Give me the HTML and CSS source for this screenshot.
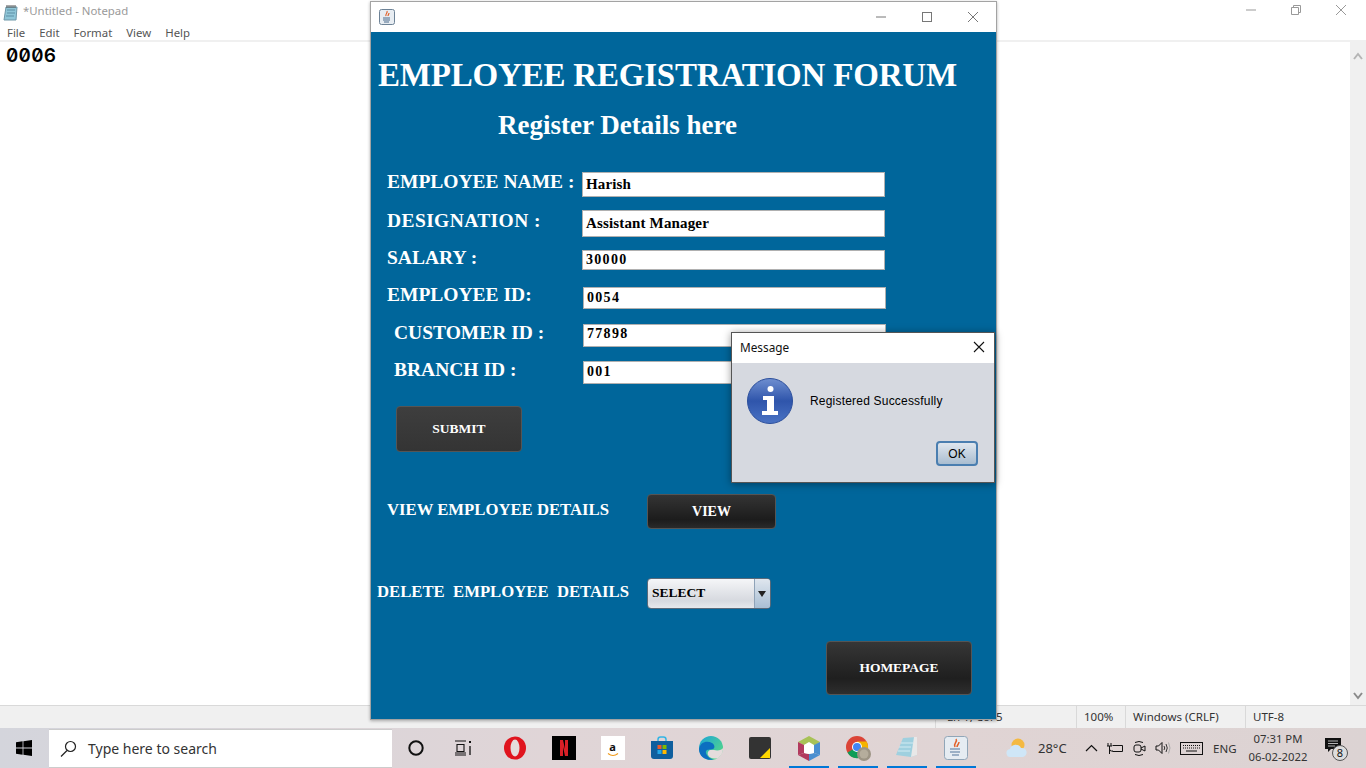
FILE: index.html
```html
<!DOCTYPE html>
<html lang="en">
<head>
  <meta charset="UTF-8">
  <title>Employee Registration</title>
  <link rel="stylesheet" href="styles.css">
</head>
<body>
  <div class="notepad">
    <div class="np-title">
      <svg class="np-icon" width="17" height="17" viewBox="0 0 17 17"><path d="M3 3h11l-1 13H1z" fill="#8fc6d8" stroke="#6f97a8"/><path d="M4 6h8M4 9h8M3 12h8" stroke="#5d8fa5"/><path d="M4 1v3M6 1v3M8 1v3M10 1v3M12 1v3" stroke="#555"/></svg>
      <span class="np-name">*Untitled - Notepad</span>
      <div class="np-controls">
        <svg width="12" height="12" viewBox="0 0 12 12"><path d="M1 6h10" stroke="#999"/></svg>
        <svg width="12" height="12" viewBox="0 0 12 12"><path d="M1.5 3.5h7v7h-7zM3.5 3.5v-2h7v7h-2" fill="none" stroke="#999"/></svg>
        <svg width="12" height="12" viewBox="0 0 12 12"><path d="M1 1l10 10M11 1L1 11" stroke="#999"/></svg>
      </div>
    </div>
    <div class="np-menu">
      <span>File</span><span>Edit</span><span>Format</span><span>View</span><span>Help</span>
    </div>
    <div class="np-body">
      <div class="np-text">0006</div>
      <div class="np-scroll">
        <svg width="10" height="8" viewBox="0 0 10 8"><path d="M1 7l4-5 4 5" fill="none" stroke="#b5b5b5" stroke-width="2"/></svg>
        <svg width="10" height="8" viewBox="0 0 10 8"><path d="M1 1l4 5 4-5" fill="none" stroke="#8a8a8a" stroke-width="2"/></svg>
      </div>
    </div>
    <div class="np-status">
      <span class="st-pos">Ln 1, Col 5</span>
      <span class="st-zoom">100%</span>
      <span class="st-eol">Windows (CRLF)</span>
      <span class="st-enc">UTF-8</span>
    </div>
  </div>

  <div class="emp-window">
    <div class="titlebar">
      <svg class="java-small" width="16" height="16" viewBox="0 0 16 16"><rect x=".5" y=".5" width="15" height="15" rx="2" fill="#e8edf2" stroke="#6d8296"/><path d="M8 2c1 2-2 3-1 5M10 4c0 1-1 2-1 3" fill="none" stroke="#e2622b" stroke-width="1.2"/><path d="M4 9h7M4 11h7M5 13h5" stroke="#4a6a8c"/></svg>
      <div class="win-controls">
        <svg width="12" height="12" viewBox="0 0 12 12"><path d="M1 6h10" stroke="#777"/></svg>
        <svg width="12" height="12" viewBox="0 0 12 12"><rect x="1.5" y="1.5" width="9" height="9" fill="none" stroke="#777"/></svg>
        <svg width="12" height="12" viewBox="0 0 12 12"><path d="M1 1l10 10M11 1L1 11" stroke="#777"/></svg>
      </div>
    </div>
    <div class="emp-form">
      <h1 class="form-title">EMPLOYEE REGISTRATION FORUM</h1>
      <h2 class="form-sub">Register Details here</h2>

      <div class="row row-name"><label>EMPLOYEE NAME :</label><div class="field">Harish</div></div>
      <div class="row row-desig"><label>DESIGNATION :</label><div class="field">Assistant Manager</div></div>
      <div class="row row-salary"><label>SALARY :</label><div class="field field-num">30000</div></div>
      <div class="row row-id"><label>EMPLOYEE ID:</label><div class="field field-num">0054</div></div>
      <div class="row row-cust"><label>CUSTOMER ID :</label><div class="field field-num">77898</div></div>
      <div class="row row-branch"><label>BRANCH ID :</label><div class="field field-num">001</div></div>

      <button class="btn btn-submit">SUBMIT</button>

      <div class="action action-view">
        <span class="action-label">VIEW EMPLOYEE DETAILS</span>
        <button class="btn btn-view">VIEW</button>
      </div>
      <div class="action action-delete">
        <span class="action-label">DELETE&nbsp; EMPLOYEE&nbsp; DETAILS</span>
        <div class="combo"><span class="combo-text">SELECT</span><span class="combo-arrow"></span></div>
      </div>

      <button class="btn btn-home">HOMEPAGE</button>
    </div>
  </div>

  <div class="dialog">
    <div class="dlg-title">
      <span>Message</span>
      <svg width="12" height="12" viewBox="0 0 12 12"><path d="M1 1l10 10M11 1L1 11" stroke="#111" stroke-width="1.1"/></svg>
    </div>
    <div class="dlg-body">
      <div class="dlg-msg">
        <svg width="46" height="46" viewBox="0 0 46 46">
          <defs><linearGradient id="infoBlue" x1="0" y1="0" x2="0" y2="1"><stop offset="0" stop-color="#6f8fd0"/><stop offset=".5" stop-color="#2f55ab"/><stop offset="1" stop-color="#4a73c4"/></linearGradient></defs>
          <circle cx="23" cy="23" r="22.5" fill="url(#infoBlue)" stroke="#2c4f9c"/>
          <circle cx="23.5" cy="11" r="3" fill="#fff"/>
          <path d="M16 18h11v15h4v4H15v-4h5V22h-4z" fill="#fff"/>
        </svg>
        <span>Registered Successfully</span>
      </div>
      <button class="dlg-ok">OK</button>
    </div>
  </div>

  <div class="taskbar">
    <div class="start">
      <svg width="16" height="16" viewBox="0 0 16 16"><path d="M0 2.2L6.6 1.3V7.6H0zM7.4 1.2L16 0V7.6H7.4zM0 8.4H6.6V14.7L0 13.8zM7.4 8.4H16V16L7.4 14.8z" fill="#000"/></svg>
    </div>
    <div class="search">
      <svg width="17" height="17" viewBox="0 0 17 17"><circle cx="10.5" cy="6.5" r="5" fill="none" stroke="#222" stroke-width="1.2"/><path d="M7 10.5L1 16.5" stroke="#222" stroke-width="1.3"/></svg>
      <span>Type here to search</span>
    </div>
    <div class="tb-tool">
      <svg width="16" height="16" viewBox="0 0 16 16"><circle cx="8" cy="8" r="6.7" fill="none" stroke="#111" stroke-width="2"/></svg>
    </div>
    <div class="tb-tool tb-tasks">
      <svg width="18" height="16" viewBox="0 0 18 16"><path d="M1 1h11M1 15h11M3 4.500h7v7H3zM1 13h11" fill="none" stroke="#111" stroke-width="1.100"/><path d="M15 1h2v2h-2z" fill="#111"/><path d="M16 6v9" stroke="#111" stroke-width="1.300"/></svg>
    </div>
    <div class="tb-app">
      <svg width="24" height="24" viewBox="0 0 24 24"><ellipse cx="12" cy="12" rx="11" ry="11.500" fill="#e0141e"/><ellipse cx="12" cy="12" rx="4.500" ry="8.500" fill="#e5dcdc"/></svg>
    </div>
    <div class="tb-app">
      <svg width="24" height="24" viewBox="0 0 24 24"><rect width="24" height="24" fill="#000"/><path d="M8 4h3l2 9V4h3v16h-3l-2-9v9H8z" fill="#d81f26"/></svg>
    </div>
    <div class="tb-app">
      <div class="amazon">
        <span>a</span>
        <svg width="12" height="4" viewBox="0 0 12 4"><path d="M1 .5q5 4 10 0" fill="none" stroke="#f09a1a" stroke-width="1.200"/></svg>
      </div>
    </div>
    <div class="tb-app">
      <svg width="24" height="24" viewBox="0 0 24 24"><path d="M8 6V3.500Q8 1 10.500 1h3Q16 1 16 3.500V6" fill="none" stroke="#33b5e5" stroke-width="1.500"/><path d="M1 5h22v15q0 3-3 3H4q-3 0-3-3z" fill="#0f5f9e"/><rect x="7.500" y="9" width="4" height="4" fill="#ef5a2a"/><rect x="12.500" y="9" width="4" height="4" fill="#7fba00"/><rect x="7.500" y="14" width="4" height="4" fill="#22a7e8"/><rect x="12.500" y="14" width="4" height="4" fill="#ffb900"/></svg>
    </div>
    <div class="tb-app">
      <svg width="24" height="24" viewBox="0 0 24 24"><defs><linearGradient id="edgeG" x1="0" y1="0" x2="1" y2="1"><stop offset="0" stop-color="#1aa4d8"/><stop offset="1" stop-color="#5fe07a"/></linearGradient></defs><circle cx="12" cy="12" r="12" fill="url(#edgeG)"/><path d="M0 13C1 6 8 4 13 7c3 2 3 5 1 6-3 1-6 0-7 2-1 3 3 8 8 8.500C7 25 0 21 0 13z" fill="#0c6fc0"/><path d="M15 14c4 1 8 0 9-2 0 5-2 8-5 10-3 1-8 1-10-3-1-3 1-5 3-5z" fill="#e5dcdc"/></svg>
    </div>
    <div class="tb-app">
      <svg width="22" height="22" viewBox="0 0 22 22"><rect width="22" height="22" rx="2" fill="#333"/><path d="M11 21L21 11v10z" fill="#ffd800"/></svg>
    </div>
    <div class="tb-app tb-open">
      <svg width="24" height="25" viewBox="0 0 24 25"><path d="M12 0l11 6-11 7z" fill="#a8c256"/><path d="M1 6l11-6v7L7 9z" fill="#a8c256"/><path d="M1 6l6 3v8l-6 2z" fill="#b23a5e"/><path d="M1 19l6-2 5 1v7z" fill="#b23a5e"/><path d="M23 6l-6 3v8l6 2z" fill="#4a8fd0"/><path d="M23 19l-6-2-5 1v7z" fill="#4a8fd0"/><path d="M12 6l5 3v8l-5 1-5-1V9z" fill="#fff"/></svg>
    </div>
    <div class="tb-app tb-open">
      <svg width="26" height="26" viewBox="0 0 26 26"><circle cx="12" cy="12" r="11" fill="#db4437"/><path d="M12 12L2.500 17.500A11 11 0 0 0 14 23z" fill="#0f9d58"/><path d="M12 6.500h9.500A11 11 0 0 1 14 23z" fill="#f4b400"/><circle cx="12" cy="12" r="5" fill="#fff"/><circle cx="12" cy="12" r="4" fill="#4285f4"/><circle cx="19" cy="19" r="7" fill="#9c9484"/><circle cx="19" cy="19" r="4.500" fill="#b5ad9c"/></svg>
    </div>
    <div class="tb-app tb-open">
      <svg width="24" height="24" viewBox="0 0 24 24"><path d="M8 2l14-1v18L16 21 1 19z" fill="#9fd0df"/><path d="M19 1h3v18l-6 2z" fill="#e8e8e8"/><path d="M6 7l12 0M4 11l12 0M3 15l12 0" stroke="#d3ebf2"/></svg>
    </div>
    <div class="tb-app tb-open">
      <svg width="24" height="24" viewBox="0 0 24 24"><rect x=".5" y=".5" width="23" height="23" rx="3" fill="#e6ecf2" stroke="#91a6b8"/><path d="M12 3c2 3-3 4-1 8M15 6c0 2-2 3-2 5" fill="none" stroke="#e2622b" stroke-width="1.500"/><path d="M6 13h10M6 16h10M8 19h7" stroke="#52749a" stroke-width="1.200"/></svg>
    </div>

    <div class="tray">
      <svg class="tray-weather" width="22" height="20" viewBox="0 0 22 20"><circle cx="12" cy="7" r="6.500" fill="#f4b942"/><path d="M5 19a4 4 0 0 1-1-8 6 6 0 0 1 11-1 4.500 4.500 0 0 1 2 9z" fill="#cfe6f7"/></svg>
      <span class="tray-temp">28°C</span>
      <svg class="tray-chev" width="13" height="8" viewBox="0 0 13 8"><path d="M1 7l5.500-5.500L12 7" fill="none" stroke="#111" stroke-width="1.200"/></svg>
      <svg class="tray-batt" width="17" height="13" viewBox="0 0 17 13"><path d="M5.500 3.500h10v6h-10M15.500 5v3" fill="none" stroke="#111"/><path d="M1 1v3M4 1v3M0 4h5M2.500 4v3a2 2 0 0 0 2 2H6M2.500 7v5" fill="none" stroke="#111"/></svg>
      <svg class="tray-meet" width="13" height="17" viewBox="0 0 13 17"><rect x="1" y="5" width="7" height="7" rx="2" fill="none" stroke="#111"/><path d="M8 8l4-2v5l-4-2M2 2.500q4-2 8 0M2 14.500q4 2 8 0" fill="none" stroke="#111"/></svg>
      <svg class="tray-sound" width="16" height="14" viewBox="0 0 16 14"><path d="M1 5h2.500L7 1.500v11L3.500 9H1z" fill="none" stroke="#111"/><path d="M9 5q1.500 2 0 4M11 3q2.500 4 0 8" fill="none" stroke="#333"/><path d="M13.500 1.500q3 5.500 0 11" fill="none" stroke="#aaa"/></svg>
      <svg class="tray-kbd" width="23" height="13" viewBox="0 0 23 13"><rect x=".5" y=".5" width="22" height="12" fill="none" stroke="#111"/><path d="M3 3.500h17M3 6h17" stroke="#111" stroke-dasharray="1 1"/><path d="M6 9h11" stroke="#111"/></svg>
      <span class="tray-lang">ENG</span>
      <div class="clock"><span>07:31 PM</span><span>06-02-2022</span></div>
      <div class="notif">
        <svg width="16" height="14" viewBox="0 0 16 14"><path d="M0 0h16v11H6l-3 3v-3H0z" fill="#111"/><path d="M3 3h10M3 5.500h10M3 8h7" stroke="#ddd" stroke-width=".8"/></svg>
        <span class="notif-badge">8</span>
      </div>
    </div>
  </div>
</body>
</html>
```

FILE: styles.css
```css
* {
  box-sizing: border-box;
}
html, body {
  margin: 0;
  height: 768px;
  overflow: hidden;
}
body {
  position: relative;
  width: 1366px;
  font-family: "Noto Sans", "Liberation Sans", sans-serif;
  background: #fff;
  display: flex;
  flex-direction: column;
}

/* notepad behind everything */
.notepad {
  height: 728px;
  display: flex;
  flex-direction: column;
}
.np-title {
  height: 24px;
  display: flex;
  align-items: center;
  padding-left: 3px;
}
.np-icon {
  margin-right: 3px;
}
.np-name {
  font-size: 11.4px;
  line-height: 22px;
  padding-bottom: 2px;
  color: #9a9a9a;
}
.np-controls {
  margin-left: auto;
  display: flex;
  gap: 33px;
  padding-right: 19px;
  margin-top: -4px;
}
.np-menu {
  height: 18px;
  display: flex;
  gap: 14px;
  padding-left: 7px;
  font-size: 11.4px;
  line-height: 18px;
  color: #555;
  border-bottom: 2px solid #f0f0f0;
}
.np-body {
  flex: 1;
  display: flex;
}
.np-text {
  flex: 1;
  padding: 4px 0 0 6px;
  font-family: Inter, "DejaVu Sans Mono", monospace;
  font-feature-settings: "zero", "tnum";
  font-size: 19px;
  font-weight: 600;
  letter-spacing: 0.3px;
  line-height: 20px;
  color: #000;
}
.np-scroll {
  width: 16px;
  background: #f0f0f0;
  display: flex;
  flex-direction: column;
  justify-content: space-between;
  align-items: center;
  padding: 10px 0 5px;
}
.np-status {
  height: 23px;
  background: #f0f0f0;
  border-top: 1px solid #d9d9d9;
  display: flex;
  font-size: 11.5px;
  line-height: 22px;
  color: #333;
  padding-left: 935px;
}
.np-status span {
  border-left: 1px solid #d9d9d9;
  padding-left: 7px;
}
.np-status .st-pos { width: 141px; padding-left: 11px; }
.st-zoom { width: 49px; }
.st-eol { width: 120px; }
.st-enc { width: 100px; }

/* java frame */
.emp-window {
  position: absolute;
  left: 370px;
  top: 1px;
  width: 627px;
  height: 719px;
  border: 1px solid #a3a3a3;
  box-shadow: 0 1px 3px rgba(0, 0, 0, 0.3);
  display: flex;
  flex-direction: column;
}
.titlebar {
  height: 30px;
  background: #fff;
  display: flex;
  align-items: center;
  padding: 0 17px 0 8px;
}
.win-controls {
  margin-left: auto;
  display: flex;
  gap: 34px;
}
.emp-form {
  flex: 1;
  background: #00669b;
  color: #fff;
  padding: 23px 0 0 1px;
  display: flex;
  flex-direction: column;
  font-family: "Liberation Serif", serif;
  font-weight: bold;
}
.form-title {
  margin: 0 0 0 6px;
  font-size: 33px;
  letter-spacing: -0.2px;
  line-height: 40px;
  white-space: nowrap;
}
.form-sub {
  margin: 15px 0 0 126px;
  font-size: 27px;
  line-height: 30px;
}
.row {
  display: flex;
  align-items: center;
  padding-left: 15px;
}
.row label {
  width: 195px;
  padding-bottom: 5px;
  font-size: 19.5px;
  white-space: nowrap;
}
.field {
  width: 303px;
  height: 100%;
  background: #fff;
  border: 1px solid #b0b0b0;
  color: #000;
  font-size: 15px;
  letter-spacing: 0.15px;
  padding: 0 0 1px 3px;
  display: flex;
  align-items: center;
}
.field-num {
  font-size: 14px;
  letter-spacing: 1.3px;
}
.row-name { height: 25px; margin-top: 32px; }
.row-desig { height: 27px; margin-top: 13px; }
.row-desig label { letter-spacing: 0.4px; }
.row-salary { height: 20px; margin-top: 13px; }
.row-id { height: 22px; margin-top: 17px; }
.row-cust { height: 23px; margin-top: 15px; }
.row-cust .field { padding-bottom: 4px; }
.row-branch { height: 23px; margin-top: 14px; }
.row-id label { width: 196px; padding-bottom: 7px; }
.row-cust, .row-branch { padding-left: 22px; }
.row-cust label, .row-branch label { width: 189px; }

.btn {
  font-family: "Liberation Serif", serif;
  font-weight: bold;
  font-size: 13.5px;
  color: #fff;
  border: 1px solid #555;
  border-radius: 4px;
  padding: 0;
}
.btn-submit {
  width: 126px;
  height: 46px;
  margin: 22px 0 0 24px;
  background: linear-gradient(#3e3e3e, #343434);
}
.action {
  display: flex;
  align-items: center;
}
.action-label {
  font-size: 16.7px;
  white-space: nowrap;
}
.action-view {
  height: 35px;
  margin-top: 42px;
  padding-left: 15px;
}
.action-view .action-label {
  width: 260px;
  padding-bottom: 3px;
}
.btn-view {
  width: 129px;
  height: 35px;
  font-size: 14px;
  background: linear-gradient(#343434, #1c1c1c 75%, #2a2a2a);
}
.action-delete {
  height: 31px;
  margin-top: 49px;
  padding-left: 5px;
}
.action-delete .action-label {
  width: 270px;
  padding-bottom: 3px;
}
.combo {
  width: 124px;
  height: 31px;
  border: 1px solid #5a6a7a;
  border-radius: 4px;
  display: flex;
  overflow: hidden;
  background: linear-gradient(#f5f6f8, #d6d9df 75%, #e6e8ec);
}
.combo-text {
  flex: 1;
  color: #000;
  font-size: 13.5px;
  line-height: 27px;
  padding-left: 4px;
}
.combo-arrow {
  width: 16px;
  border-left: 1px solid #8fa3b8;
  background: linear-gradient(#dfe6ee, #a9bfd4);
  position: relative;
}
.combo-arrow::after {
  content: "";
  position: absolute;
  left: 3px;
  top: 12px;
  border: 4px solid transparent;
  border-top: 6px solid #222;
  border-bottom: 0;
}
.btn-home {
  width: 146px;
  height: 54px;
  margin: 32px 0 0 454px;
  background: linear-gradient(#363636, #1f1f1f 70%, #2e2e2e);
}

/* message dialog */
.dialog {
  position: absolute;
  left: 731px;
  top: 332px;
  width: 264px;
  height: 151px;
  border: 1px solid #555;
  box-shadow: 0 1px 8px rgba(0, 0, 0, 0.4);
  display: flex;
  flex-direction: column;
}
.dlg-title {
  height: 30px;
  background: #fff;
  display: flex;
  align-items: center;
  justify-content: space-between;
  padding: 0 9px 2px 8px;
  font-size: 11.8px;
  color: #111;
}
.dlg-body {
  flex: 1;
  background: #d6d9e0;
  padding: 15px 16px 0 15px;
  display: flex;
  flex-direction: column;
  font-family: "Liberation Sans", sans-serif;
  font-size: 12px;
  color: #000;
}
.dlg-msg {
  display: flex;
  align-items: center;
  gap: 17px;
  letter-spacing: 0.2px;
}
.dlg-ok {
  align-self: flex-end;
  width: 42px;
  height: 25px;
  margin-top: 17px;
  padding: 0;
  font-family: "Liberation Sans", sans-serif;
  font-size: 12px;
  color: #000;
  border: 2px solid #4a7eb0;
  border-radius: 4px;
  background: linear-gradient(#dfe6ee, #a9bdd0);
}

/* taskbar */
.taskbar {
  height: 40px;
  display: flex;
  align-items: center;
  background: linear-gradient(90deg, #d4d5dc, #e0d5d7 40%, #e0d4d4 70%, #dcd3d3);
}
.start {
  width: 49px;
  padding-left: 16px;
}
.start svg {
  display: block;
}
.search {
  width: 343px;
  height: 39px;
  margin-top: 1px;
  background: #fff;
  display: flex;
  align-items: center;
  gap: 11px;
  padding-left: 11px;
  border: 1px solid #ccc;
  border-width: 1px 0;
  font-size: 14px;
  color: #333;
}
.tb-tool {
  width: 48px;
  display: flex;
  justify-content: center;
}
.tb-tasks {
  padding-right: 2px;
  margin-right: 2px;
}
.tb-app {
  width: 49px;
  height: 40px;
  display: flex;
  align-items: center;
  justify-content: center;
}
.tb-open {
  background: linear-gradient(#0078d7, #0078d7) no-repeat center bottom / 40px 2px;
}
.amazon {
  width: 24px;
  height: 24px;
  background: #fff;
  color: #111;
  font-size: 11px;
  font-weight: bold;
  line-height: 13px;
  padding-top: 4px;
  display: flex;
  flex-direction: column;
  align-items: center;
}
.tray {
  margin-left: 26px;
  flex: 1;
  display: flex;
  align-items: center;
  font-size: 11.5px;
  color: #333;
}
.tray-weather { margin-right: 10px; }
.tray-temp { width: 47px; font-size: 13px; }
.tray-chev { margin-right: 9px; }
.tray-batt { margin-right: 9px; }
.tray-meet { margin-right: 9px; }
.tray-sound { margin-right: 9px; }
.tray-kbd { margin-right: 10px; }
.tray-lang { width: 32px; }
.clock {
  width: 66px;
  display: flex;
  flex-direction: column;
  align-items: center;
  line-height: 18px;
  font-size: 11.3px;
}
.notif {
  position: relative;
  margin-left: 14px;
  height: 20px;
}
.notif-badge {
  position: absolute;
  left: 7px;
  top: 7px;
  width: 16px;
  height: 16px;
  border: 1px solid #555;
  border-radius: 50%;
  background: #ddd;
  color: #111;
  font-size: 11px;
  line-height: 14px;
  text-align: center;
}
```
